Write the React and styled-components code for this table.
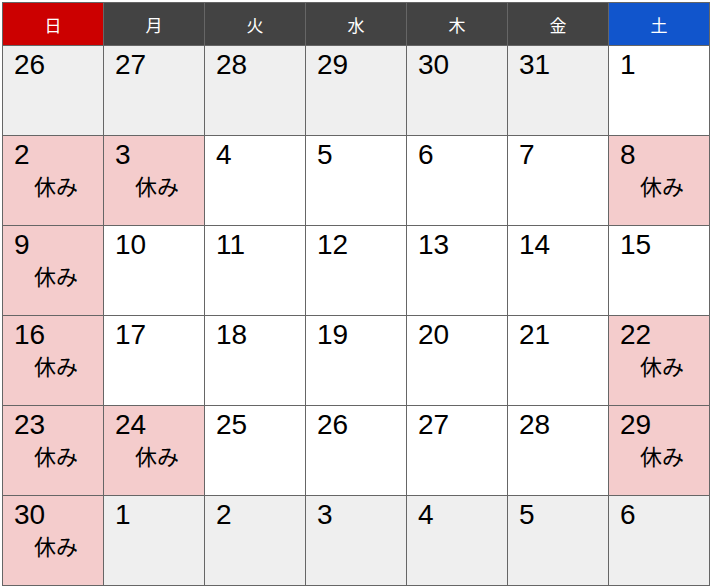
import React from 'react';
import styled, { createGlobalStyle } from 'styled-components';

const GlobalStyle = createGlobalStyle`
  html, body {
    margin: 0;
    padding: 0;
    background: #ffffff;
  }
`;

const Page = styled.div`
  padding: 2px;
`;

const Grid = styled.div`
  display: grid;
  grid-template-columns: repeat(7, 100px);
  grid-template-rows: 42px repeat(6, 89px);
  gap: 1px;
  padding: 1px;
  width: max-content;
  background: #666666;
`;

const headBg = { sun: '#cc0000', sat: '#1155cc', week: '#434343' };

const HeadCell = styled.div`
  display: flex;
  align-items: center;
  justify-content: center;
  background: ${(p) => headBg[p.$kind]};
  color: #ffffff;
  font-family: 'Noto Sans CJK JP', sans-serif;
  font-size: 17px;
`;

const cellBg = { out: '#efefef', off: '#f4cccc', day: '#ffffff' };

const DayCell = styled.div`
  background: ${(p) => cellBg[p.$kind]};
  padding: 3px 0 0 11px;
  color: #000000;
`;

const DayNum = styled.div`
  font-family: 'Liberation Sans', Arial, sans-serif;
  font-size: 28px;
  line-height: 32px;
`;

const OffLabel = styled.div`
  font-family: 'Noto Sans CJK JP', sans-serif;
  font-size: 22px;
  line-height: 30px;
  padding-left: 20px;
  margin-top: -1px;
`;

const heads = [
  ['日', 'sun'],
  ['月', 'week'],
  ['火', 'week'],
  ['水', 'week'],
  ['木', 'week'],
  ['金', 'week'],
  ['土', 'sat'],
];

// [number, kind]
const days = [
  [26, 'out'], [27, 'out'], [28, 'out'], [29, 'out'], [30, 'out'], [31, 'out'], [1, 'day'],
  [2, 'off'], [3, 'off'], [4, 'day'], [5, 'day'], [6, 'day'], [7, 'day'], [8, 'off'],
  [9, 'off'], [10, 'day'], [11, 'day'], [12, 'day'], [13, 'day'], [14, 'day'], [15, 'day'],
  [16, 'off'], [17, 'day'], [18, 'day'], [19, 'day'], [20, 'day'], [21, 'day'], [22, 'off'],
  [23, 'off'], [24, 'off'], [25, 'day'], [26, 'day'], [27, 'day'], [28, 'day'], [29, 'off'],
  [30, 'off'], [1, 'out'], [2, 'out'], [3, 'out'], [4, 'out'], [5, 'out'], [6, 'out'],
];

const App = () => {
  return (
    <Page>
      <GlobalStyle />
      <Grid>
        {heads.map(([label, kind]) => (
          <HeadCell key={label} $kind={kind}>
            {label}
          </HeadCell>
        ))}
        {days.map(([num, kind], i) => (
          <DayCell key={i} $kind={kind}>
            <DayNum>{num}</DayNum>
            {kind === 'off' && <OffLabel>休み</OffLabel>}
          </DayCell>
        ))}
      </Grid>
    </Page>
  );
};

export default App;
